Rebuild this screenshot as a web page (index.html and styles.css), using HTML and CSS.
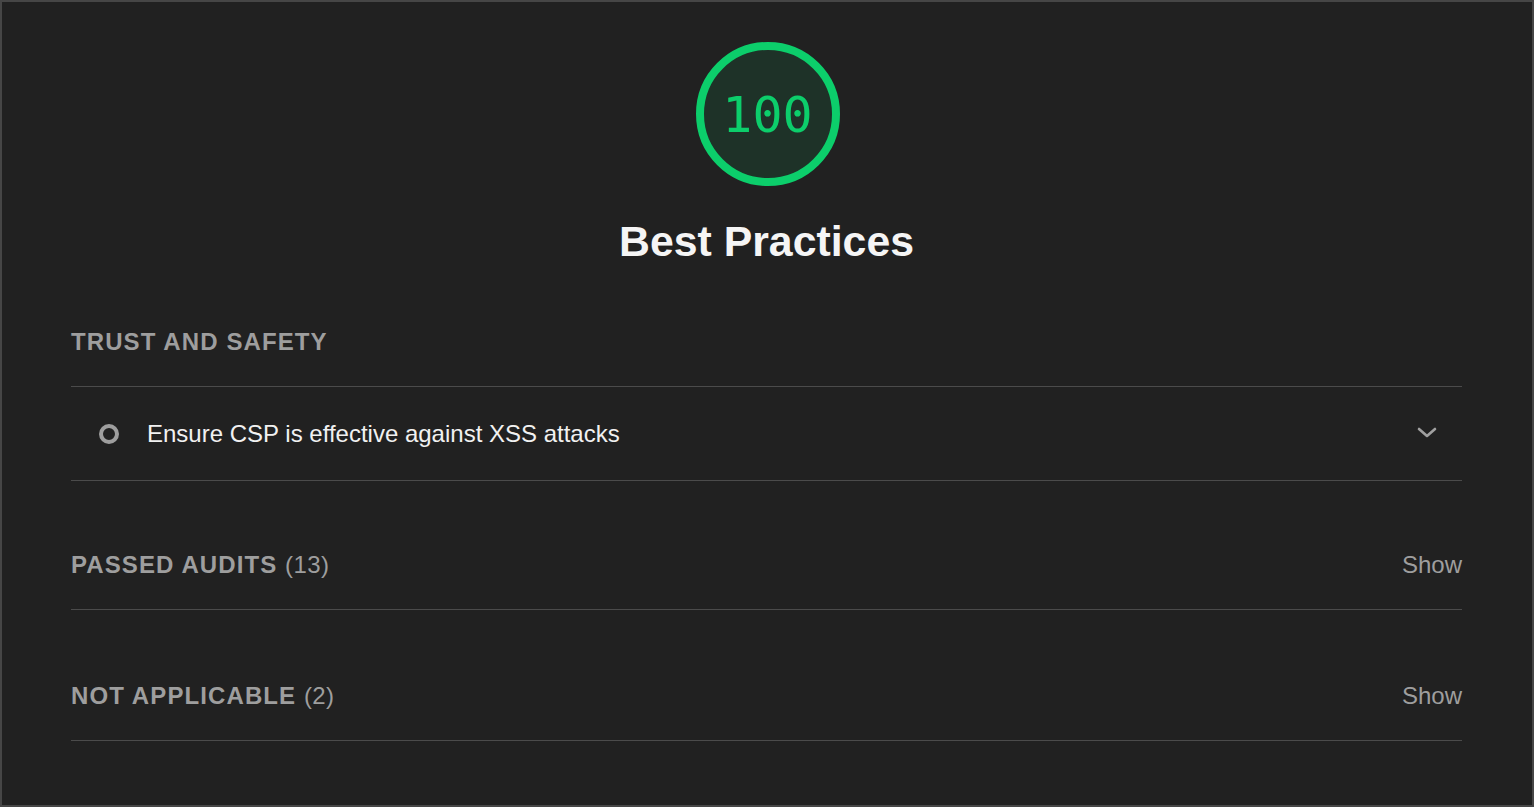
FILE: index.html
```html
<!DOCTYPE html>
<html lang="en">
<head>
<meta charset="utf-8">
<title>Best Practices</title>
<link rel="stylesheet" href="styles.css">
</head>
<body>
<div class="frame">
  <div class="category">
    <div class="score-header">
      <div class="gauge">
        <svg class="gauge-svg" viewBox="0 0 144 144" width="144" height="144">
          <circle cx="72" cy="72" r="68" fill="rgba(12,206,107,0.10)" stroke="#0cce6b" stroke-width="8"/>
        </svg>
        <span class="gauge-value">100</span>
      </div>
      <h1 class="category-title">Best Practices</h1>
    </div>

    <section class="group">
      <div class="group-header first">
        <span class="group-title">Trust and Safety</span>
      </div>
      <div class="audit">
        <span class="audit-icon"></span>
        <span class="audit-title">Ensure CSP is effective against XSS attacks</span>
        <svg class="chevron" viewBox="0 0 20 12" width="20" height="12">
          <path d="M2 2 L10 9 L18 2" fill="none" stroke="#a0a0a0" stroke-width="2.6" stroke-linecap="round" stroke-linejoin="round"/>
        </svg>
      </div>
    </section>

    <section class="group">
      <div class="group-header toggle">
        <span class="group-title">Passed audits <span class="count">(13)</span></span>
        <span class="show">Show</span>
      </div>
    </section>

    <section class="group">
      <div class="group-header toggle last">
        <span class="group-title">Not applicable <span class="count">(2)</span></span>
        <span class="show">Show</span>
      </div>
    </section>
  </div>
</div>
</body>
</html>
```

FILE: styles.css
```css
* {
  box-sizing: border-box;
}

html, body {
  margin: 0;
  padding: 0;
  background: #212121;
}

body {
  font-family: "Liberation Sans", Arial, Helvetica, sans-serif;
  color: #f1f1f1;
}

.frame {
  width: 1534px;
  height: 807px;
  border: 2px solid #464646;
  background: #212121;
  overflow: hidden;
}

.category {
  padding: 40px 70px 0 69px;
}

.score-header {
  display: flex;
  flex-direction: column;
  align-items: center;
}

.gauge {
  position: relative;
  width: 144px;
  height: 144px;
  margin-left: 2px;
}

.gauge-svg {
  display: block;
}

.gauge-value {
  position: absolute;
  inset: 0;
  display: flex;
  align-items: center;
  justify-content: center;
  font-family: "DejaVu Sans Mono", "Liberation Mono", monospace;
  font-size: 50px;
  color: #0cce6b;
  padding-top: 2px;
}

.category-title {
  margin: 30px 0 0;
  font-size: 42.8px;
  line-height: 50px;
  font-weight: 700;
  color: #f5f5f5;
}

.group-header {
  display: flex;
  align-items: center;
  justify-content: space-between;
  height: 36px;
  box-sizing: content-box;
  padding-bottom: 26px;
  border-bottom: 1px solid #4b4b4b;
}

.group-header.first {
  padding-top: 58px;
}

.group-header.toggle {
  padding-top: 66px;
}

.group-header.toggle.last {
  padding-top: 68px;
}

.group-title {
  font-size: 24px;
  font-weight: 700;
  text-transform: uppercase;
  letter-spacing: 1.1px;
  color: #9e9e9e;
}

.count {
  font-weight: 400;
  letter-spacing: 0.4px;
}

.show {
  font-size: 24px;
  color: #9e9e9e;
}

.audit {
  display: flex;
  align-items: center;
  height: 94px;
  border-bottom: 1px solid #4b4b4b;
  padding: 0 25px 0 28px;
}

.audit-icon {
  width: 20px;
  height: 20px;
  border-radius: 50%;
  border: 4px solid #9e9e9e;
  flex: none;
}

.audit-title {
  margin-left: 28px;
  font-size: 24px;
  color: #f1f1f1;
  flex: 1;
}

.chevron {
  flex: none;
  margin-top: -2px;
}
```
